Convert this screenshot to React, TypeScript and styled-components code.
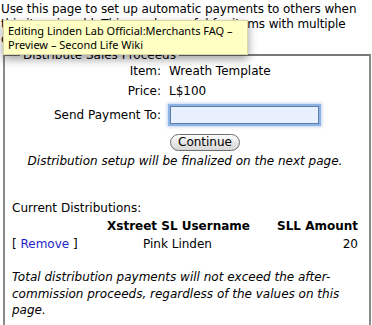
import styled, { createGlobalStyle } from 'styled-components';

const GlobalStyle = createGlobalStyle`
  html, body {
    margin: 0;
    padding: 0;
    background: #fff;
    overflow: hidden;
  }
  body {
    font-family: "DejaVu Sans", Verdana, sans-serif;
    font-size: 12px;
    color: #000;
  }
`;

export default function App() {
  return (
    <>
      <GlobalStyle />
      <Page>
        <Intro>
          Use this page to set up automatic payments to others when this item is sold. This can
          be useful for items with multiple creators.
        </Intro>
        <Fieldset>
          <Legend>Distribute Sales Proceeds</Legend>
          <FormGrid>
            <Label>Item:</Label>
            <Value>Wreath Template</Value>
            <Label>Price:</Label>
            <Value>L$100</Value>
            <Label $tall>Send Payment To:</Label>
            <Value>
              <PayeeInput autoFocus defaultValue="" />
            </Value>
            <span />
            <Value>
              <ContinueButton>Continue</ContinueButton>
            </Value>
          </FormGrid>
          <Note>Distribution setup will be finalized on the next page.</Note>

          <SectionTitle>Current Distributions:</SectionTitle>
          <DistTable>
            <span />
            <HeadCell $align="center">Xstreet SL Username</HeadCell>
            <HeadCell $align="right">SLL Amount</HeadCell>
            <Cell>
              [ <RemoveLink href="#">Remove</RemoveLink> ]
            </Cell>
            <Cell $align="center">Pink Linden</Cell>
            <Cell $align="right">20</Cell>
          </DistTable>

          <Disclaimer>
            Total distribution payments will not exceed the after-commission proceeds,
            regardless of the values on this page.
          </Disclaimer>
        </Fieldset>
        <Tooltip>
          Editing Linden Lab Official:Merchants FAQ –<br />
          Preview – Second Life Wiki
        </Tooltip>
      </Page>
    </>
  );
}

const Page = styled.div`
  position: relative;
  width: 372px;
  height: 325px;
`;

const Intro = styled.p`
  margin: 0;
  padding: 2px 0 0 1px;
  line-height: 15px;
  width: 368px;
  letter-spacing: -0.1px;
`;

const Fieldset = styled.fieldset`
  margin: 1px 1px 0 3px;
  padding: 2px 11px 8px 7px;
  border: 2px solid #8a8a8a;
  border-top-color: #7a7a7a;
  min-width: 0;
`;

const Legend = styled.legend`
  padding: 0 3px;
  margin-left: 8px;
  line-height: 14px;
`;

const FormGrid = styled.div`
  display: grid;
  grid-template-columns: 149px 1fr;
  column-gap: 8px;
  row-gap: 5px;
  align-items: center;
`;

const Label = styled.span<{ $tall?: boolean }>`
  text-align: right;
  line-height: ${(p) => (p.$tall ? '21px' : '15px')};
`;

const Value = styled.span`
  line-height: 15px;
  display: flex;
  align-items: center;
`;

const PayeeInput = styled.input`
  box-sizing: border-box;
  width: 149px;
  height: 18px;
  margin: 2px 0 2px 1px;
  border: 1px solid #5b7fa8;
  background: #e8f0fe;
  outline: none;
  box-shadow: 0 0 0 2px #8fb4e4, 0 0 3px 3px rgba(120, 160, 220, 0.45);
  font-family: inherit;
  font-size: 12px;
  padding: 0 3px;
`;

const ContinueButton = styled.button`
  margin: 3px 0 0 1px;
  height: 17px;
  padding: 0 7px;
  border: 1px solid #6e6e6e;
  border-radius: 9px;
  background: linear-gradient(#ffffff, #e4e4e4 55%, #d8d8d8);
  font-family: inherit;
  font-size: 12px;
  line-height: 15px;
  color: #000;
`;

const Note = styled.p`
  margin: 3px 0 0;
  text-align: center;
  font-style: italic;
  line-height: 15px;
`;

const SectionTitle = styled.div`
  margin-top: 32px;
  line-height: 15px;
`;

const DistTable = styled.div`
  display: grid;
  grid-template-columns: 95px 141px 1fr;
  row-gap: 3px;
  margin-top: 3px;
  white-space: nowrap;
`;

const HeadCell = styled.span<{ $align?: string }>`
  font-weight: bold;
  text-align: ${(p) => p.$align || 'left'};
  line-height: 15px;
`;

const Cell = styled.span<{ $align?: string }>`
  text-align: ${(p) => p.$align || 'left'};
  line-height: 15px;
`;

const RemoveLink = styled.a`
  color: #1f1fc6;
  text-decoration: none;
`;

const Disclaimer = styled.p`
  margin: 17px 0 0;
  font-style: italic;
  line-height: 16.5px;
`;

const Tooltip = styled.div`
  position: absolute;
  left: 3px;
  top: 20px;
  width: 236px;
  padding: 3px 3px 2px 4px;
  background: #ffffc4;
  border: 1px solid #d8d8a8;
  box-shadow: 0 4px 9px rgba(0, 0, 0, 0.4);
  font-family: "Noto Sans", "DejaVu Sans", sans-serif;
  font-size: 11px;
  line-height: 14px;
  color: #000;
`;
